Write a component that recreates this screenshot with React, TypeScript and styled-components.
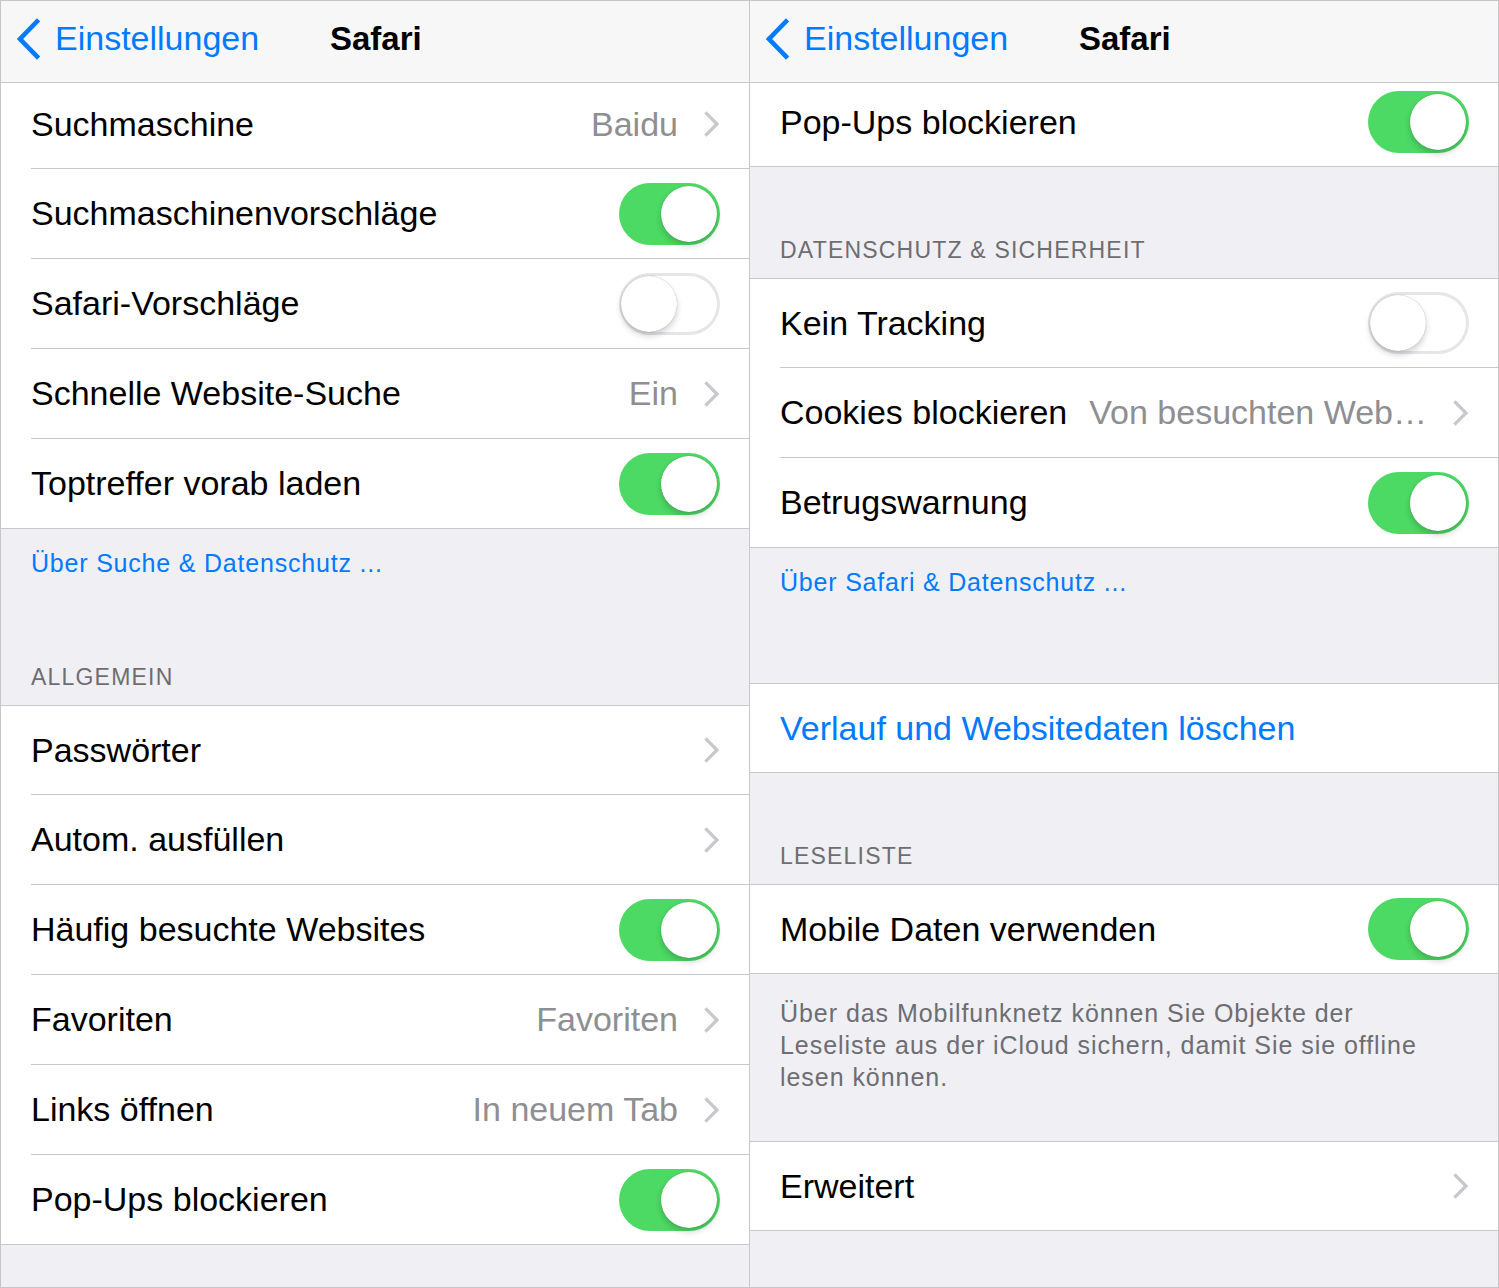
import React from "react";
import styled, { createGlobalStyle } from "styled-components";

const GlobalStyle = createGlobalStyle`
  html, body { margin: 0; padding: 0; background: #efeff4; }
  body { font-family: "Liberation Sans", Arial, sans-serif; -webkit-font-smoothing: antialiased; }
  * { box-sizing: border-box; }
`;

const BLUE = "#007aff";
const GREEN = "#4cd964";
const SEP = "#c8c7cc";

const Frame = styled.div`
  display: flex;
  width: 1499px;
  height: 1288px;
  border: 1px solid #c6c6c8;
  background: #efeff4;
  overflow: hidden;
`;

const Panel = styled.div<{ $divider?: boolean }>`
  display: flex;
  flex-direction: column;
  width: ${(p) => (p.$divider ? 749 : 748)}px;
  height: 100%;
  border-left: ${(p) => (p.$divider ? `1px solid ${SEP}` : "none")};
`;

const NavBar = styled.div`
  display: flex;
  align-items: center;
  height: 82px;
  flex: none;
  padding: 0 0 6px 14px;
  background: #f7f7f7;
  border-bottom: 1px solid ${SEP};
`;

const BackButton = styled.div`
  display: flex;
  align-items: center;
  gap: 14px;
  width: 315px;
  color: ${BLUE};
  font-size: 34px;
`;

const Title = styled.div`
  font-size: 33px;
  font-weight: 700;
  color: #000;
`;

const Group = styled.div<{ $top?: boolean }>`
  background: #fff;
  flex: none;
  border-top: ${(p) => (p.$top ? `1px solid ${SEP}` : "none")};
  border-bottom: 1px solid ${SEP};
`;

const Row = styled.div`
  padding-left: 30px;
`;

const RowInner = styled.div<{ $h: number; $first?: boolean; $lift: number }>`
  display: flex;
  align-items: center;
  height: ${(p) => p.$h}px;
  padding-right: 29px;
  padding-bottom: ${(p) => p.$lift}px;
  border-top: ${(p) => (p.$first ? "none" : `1px solid ${SEP}`)};
`;

const Label = styled.div<{ $blue?: boolean }>`
  font-size: 34px;
  color: ${(p) => (p.$blue ? BLUE : "#000")};
  white-space: nowrap;
`;

const Value = styled.div`
  margin-left: auto;
  font-size: 34px;
  color: #8e8e93;
  white-space: nowrap;
  padding-right: 26px;
`;

const ChevronBox = styled.svg`
  flex: none;
  display: block;
`;

const Track = styled.div<{ $on: boolean }>`
  position: relative;
  margin-left: auto;
  flex: none;
  width: 101px;
  height: 62px;
  border-radius: 31px;
  background: ${(p) => (p.$on ? GREEN : "#fff")};
  box-shadow: ${(p) => (p.$on ? "none" : "inset 0 0 0 3px #e5e5ea")};
`;

const Knob = styled.div<{ $on: boolean }>`
  position: absolute;
  top: 3px;
  left: ${(p) => (p.$on ? 42 : 2)}px;
  width: 56px;
  height: 56px;
  border-radius: 50%;
  background: #fff;
  box-shadow: 0 4px 6px rgba(0, 0, 0, 0.18), 0 0 1px rgba(0, 0, 0, 0.35);
`;

const Gap = styled.div<{ $h?: number }>`
  display: flex;
  flex-direction: column;
  flex: ${(p) => (p.$h ? "none" : "1")};
  height: ${(p) => (p.$h ? `${p.$h}px` : "auto")};
  padding: 0 30px;
`;

const FooterLink = styled.div`
  margin-top: 18px;
  font-size: 25px;
  line-height: 32px;
  letter-spacing: 0.8px;
  color: ${BLUE};
`;

const FooterText = styled.div`
  margin-top: 23px;
  font-size: 25px;
  line-height: 32px;
  letter-spacing: 0.95px;
  color: #6d6d72;
`;

const SectionTitle = styled.div`
  margin-top: auto;
  margin-bottom: 14px;
  font-size: 23px;
  line-height: 28px;
  letter-spacing: 1.2px;
  color: #6d6d72;
  text-transform: uppercase;
`;

const Chevron = () => (
  <ChevronBox width="16" height="26" viewBox="0 0 16 26">
    <polyline points="2.5,2.5 13,13 2.5,23.5" fill="none" stroke="#c7c7cc" strokeWidth="3.2" strokeLinecap="square" />
  </ChevronBox>
);

const BackChevron = () => (
  <ChevronBox width="26" height="42" viewBox="0 0 26 42">
    <polyline points="22,3.5 5,21 22,38.5" fill="none" stroke={BLUE} strokeWidth="4.6" strokeLinecap="square" />
  </ChevronBox>
);

const Toggle = ({ on }: { on: boolean }) => (
  <Track $on={on}>
    <Knob $on={on} />
  </Track>
);

type Item = {
  label: string;
  value?: string;
  chevron?: boolean;
  toggle?: boolean;
  blue?: boolean;
};

const Cell = ({ item, h, first, lift }: { item: Item; h: number; first?: boolean; lift: number }) => (
  <Row>
    <RowInner $h={h} $first={first} $lift={lift}>
      <Label $blue={item.blue}>{item.label}</Label>
      {item.value !== undefined && <Value>{item.value}</Value>}
      {item.chevron && item.value === undefined && <Value />}
      {item.chevron && <Chevron />}
      {item.toggle !== undefined && <Toggle on={item.toggle} />}
    </RowInner>
  </Row>
);

const List = ({
  items,
  firstH,
  h = 90,
  top,
  firstLift = 0,
}: {
  items: Item[];
  firstH: number;
  h?: number;
  top?: boolean;
  firstLift?: number;
}) => (
  <Group $top={top}>
    {items.map((it, i) => (
      <Cell key={it.label} item={it} h={i === 0 ? firstH : h} first={i === 0} lift={i === 0 ? firstLift : 0} />
    ))}
  </Group>
);

const Header = () => (
  <NavBar>
    <BackButton>
      <BackChevron />
      <span>Einstellungen</span>
    </BackButton>
    <Title>Safari</Title>
  </NavBar>
);

export default function App() {
  return (
    <>
      <GlobalStyle />
      <Frame>
        <Panel>
          <Header />
          <List
            firstH={85}
            firstLift={3}
            items={[
              { label: "Suchmaschine", value: "Baidu", chevron: true },
              { label: "Suchmaschinenvorschläge", toggle: true },
              { label: "Safari-Vorschläge", toggle: false },
              { label: "Schnelle Website-Suche", value: "Ein", chevron: true },
              { label: "Toptreffer vorab laden", toggle: true },
            ]}
          />
          <Gap $h={176}>
            <FooterLink>Über Suche &amp; Datenschutz ...</FooterLink>
            <SectionTitle>Allgemein</SectionTitle>
          </Gap>
          <List
            top
            firstH={88}
            items={[
              { label: "Passwörter", chevron: true },
              { label: "Autom. ausfüllen", chevron: true },
              { label: "Häufig besuchte Websites", toggle: true },
              { label: "Favoriten", value: "Favoriten", chevron: true },
              { label: "Links öffnen", value: "In neuem Tab", chevron: true },
              { label: "Pop-Ups blockieren", toggle: true },
            ]}
          />
          <Gap />
        </Panel>
        <Panel $divider>
          <Header />
          <List firstH={83} firstLift={5} items={[{ label: "Pop-Ups blockieren", toggle: true }]} />
          <Gap $h={111}>
            <SectionTitle>Datenschutz &amp; Sicherheit</SectionTitle>
          </Gap>
          <List
            top
            firstH={88}
            items={[
              { label: "Kein Tracking", toggle: false },
              { label: "Cookies blockieren", value: "Von besuchten Web…", chevron: true },
              { label: "Betrugswarnung", toggle: true },
            ]}
          />
          <Gap $h={135}>
            <FooterLink>Über Safari &amp; Datenschutz ...</FooterLink>
          </Gap>
          <List top firstH={88} items={[{ label: "Verlauf und Websitedaten löschen", blue: true }]} />
          <Gap $h={111}>
            <SectionTitle>Leseliste</SectionTitle>
          </Gap>
          <List top firstH={88} items={[{ label: "Mobile Daten verwenden", toggle: true }]} />
          <Gap $h={167}>
            <FooterText>
              Über das Mobilfunknetz können Sie Objekte der
              <br />
              Leseliste aus der iCloud sichern, damit Sie sie offline
              <br />
              lesen können.
            </FooterText>
          </Gap>
          <List top firstH={88} items={[{ label: "Erweitert", chevron: true }]} />
          <Gap />
        </Panel>
      </Frame>
    </>
  );
}
